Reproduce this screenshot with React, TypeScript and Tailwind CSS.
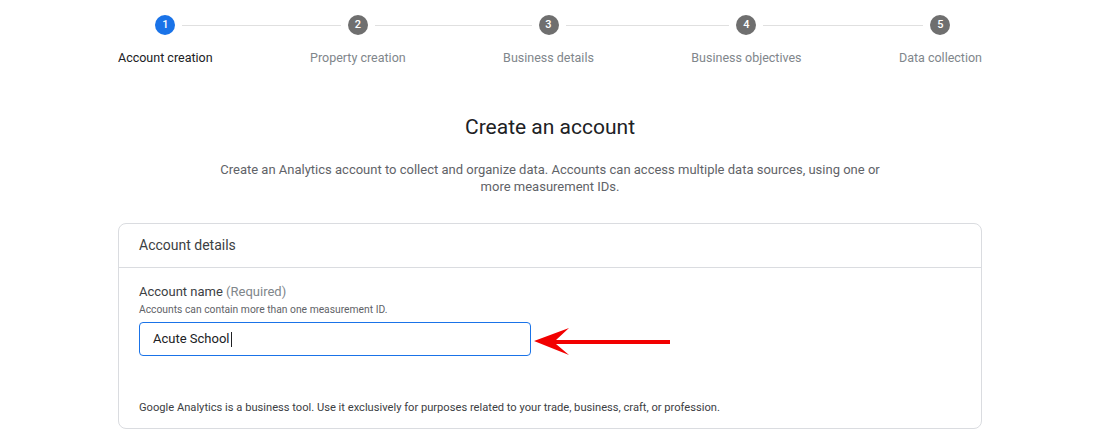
import React from "react";

const steps = [
  "Account creation",
  "Property creation",
  "Business details",
  "Business objectives",
  "Data collection",
];

function Stepper() {
  const cols: React.ReactNode[] = [];
  steps.forEach((label, i) => {
    const active = i === 0;
    cols.push(
      <div key={`s${i}`} className="flex flex-col items-stretch">
        <div className="flex items-center h-[50px]">
          <div className={`flex-1 h-px ${i === 0 ? "" : "bg-[#e0e0e0]"}`} />
          <div
            className={`mx-[7px] w-[20px] h-[20px] rounded-full flex items-center justify-center text-white text-[11px] font-medium ${
              active ? "bg-[#1a73e8]" : "bg-[#6f6f6f]"
            }`}
          >
            {i + 1}
          </div>
          <div className={`flex-1 h-px ${i === steps.length - 1 ? "" : "bg-[#e0e0e0]"}`} />
        </div>
        <div
          className={`text-[12.5px] leading-[16px] whitespace-nowrap text-center ${
            active ? "text-[#202124]" : "text-[#80868b]"
          }`}
        >
          {label}
        </div>
      </div>
    );
    if (i < steps.length - 1) {
      cols.push(
        <div key={`g${i}`} className="flex items-center h-[50px]">
          <div className="w-full h-px bg-[#e0e0e0]" />
        </div>
      );
    }
  });
  return (
    <div className="grid grid-cols-[auto_1fr_auto_1fr_auto_1fr_auto_1fr_auto] items-start">
      {cols}
    </div>
  );
}

export default function App() {
  return (
    <div
      className="w-[1100px] h-[447px] bg-white overflow-hidden"
      style={{ fontFamily: "Roboto, 'Noto Sans', Arial, sans-serif" }}
    >
      <div className="w-[864px] mx-auto">
        <Stepper />
        <h1 className="mt-[48px] text-center text-[21px] leading-[26px] text-[#202124]">
          Create an account
        </h1>
        <p className="mt-[21px] mx-auto max-w-[680px] text-center text-[13px] leading-[17px] text-[#5f6368]">
          Create an Analytics account to collect and organize data. Accounts can access multiple data sources, using one or more measurement IDs.
        </p>
        <div className="mt-[28px] border border-[#dadce0] rounded-[8px] h-[206px] flex flex-col">
          <div className="h-[44px] border-b border-[#dadce0] px-[20px] flex items-center text-[14px] text-[#3c4043]">
            Account details
          </div>
          <div className="px-[20px] pt-[16px] flex flex-col flex-1">
            <div className="text-[13px] leading-[16px] text-[#3c4043]">
              Account name <span className="text-[#80868b]">(Required)</span>
            </div>
            <div className="mt-[4px] text-[10.3px] leading-[12px] text-[#5f6368]">
              Accounts can contain more than one measurement ID.
            </div>
            <div className="relative mt-[6px] w-[392px]">
              <div className="h-[34px] border border-[#1a73e8] rounded-[4px] px-[13px] flex items-center text-[13px] text-[#202124]">
                Acute School<span className="inline-block w-px h-[15px] bg-[#202124] ml-px" />
              </div>
              <svg
                className="absolute left-[395px] top-[4px]"
                width="140"
                height="30"
                viewBox="0 0 140 30"
              >
                <path d="M0 15 L35 2 L22 14 L136 14 L136 18 L22 18 L35 29 Z" fill="#f20000" />
              </svg>
            </div>
            <div className="mt-auto mb-[14px] text-[11.15px] leading-[13px] text-[#3c4043]">
              Google Analytics is a business tool. Use it exclusively for purposes related to your trade, business, craft, or profession.
            </div>
          </div>
        </div>
      </div>
    </div>
  );
}
